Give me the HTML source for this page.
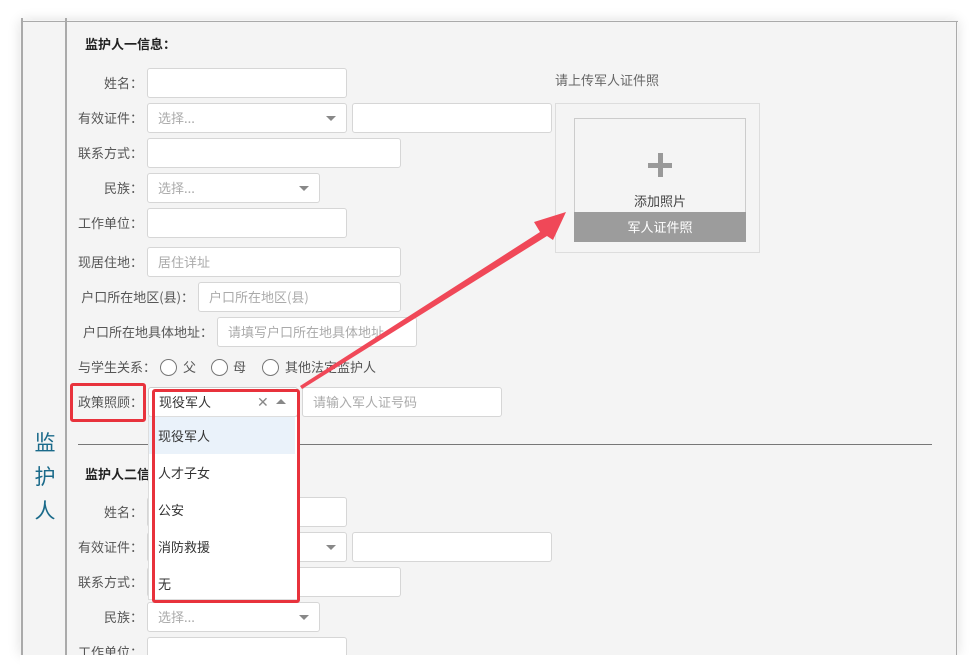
<!DOCTYPE html>
<html><head><meta charset="utf-8"><style>
*{box-sizing:border-box;margin:0;padding:0}
body{width:976px;height:671px;background:#fff;position:relative;overflow:hidden;font-family:"Noto Sans CJK SC","Liberation Sans",sans-serif;font-size:13px;color:#555}
.card{position:absolute;left:20px;top:20px;width:938px;height:635px;background:#f4f4f4;box-shadow:0 0 12px rgba(0,0,0,.12);overflow:hidden}
.a{position:absolute}
.lab{position:absolute;text-align:right;color:#555;font-size:13px;line-height:30px;white-space:nowrap}
.in{position:absolute;height:30px;background:#fff;border:1px solid #d6d6d6;border-radius:3px;color:#aaa;line-height:28px;padding-left:10px;font-size:13px;white-space:nowrap}
.tri{position:absolute;width:0;height:0;border-left:5px solid transparent;border-right:5px solid transparent;border-top:5px solid #888;top:12px}
.rad{position:absolute;width:17px;height:17px;border:1px solid #777;border-radius:50%;background:#fff;top:359px}
.opt{position:absolute;left:0;width:146px;height:37px;line-height:37px;padding-left:9px;color:#333;font-size:13px}
</style></head><body>
<div class="card"></div>
<div class="a" style="left:21px;top:18px;width:2px;height:637px;background:#aaa"></div>
<div class="a" style="left:65px;top:18px;width:2px;height:637px;background:#aaa"></div>
<div class="a" style="left:21px;top:21px;width:937px;height:1px;background:#aaa"></div>
<div class="a" style="left:956px;top:21px;width:1px;height:634px;background:#aaa"></div>
<div class="a" style="left:30px;top:425px;width:30px;font-size:21px;line-height:34px;color:#1a6a8a;text-align:center">监<br>护<br>人</div>

<div class="a" style="left:85px;top:34px;font-weight:bold;color:#222;font-size:13px">监护人一信息：</div>
<div class="lab" style="left:40px;width:103px;top:68px">姓名：</div><div class="in" style="left:147px;top:68px;width:200px"></div>
<div class="lab" style="left:40px;width:103px;top:103px">有效证件：</div><div class="in" style="left:147px;top:103px;width:200px">选择...<span class="tri" style="left:178px"></span></div><div class="in" style="left:352px;top:103px;width:200px"></div>
<div class="lab" style="left:40px;width:103px;top:138px">联系方式：</div><div class="in" style="left:147px;top:138px;width:254px"></div>
<div class="lab" style="left:40px;width:103px;top:173px">民族：</div><div class="in" style="left:147px;top:173px;width:173px">选择...<span class="tri" style="left:151px"></span></div>
<div class="lab" style="left:40px;width:103px;top:208px">工作单位：</div><div class="in" style="left:147px;top:208px;width:200px"></div>
<div class="lab" style="left:40px;width:103px;top:247px">现居住地：</div><div class="in" style="left:147px;top:247px;width:254px">居住详址</div>
<div class="lab" style="left:40px;width:154px;top:282px">户口所在地区(县)：</div><div class="in" style="left:198px;top:282px;width:203px">户口所在地区(县)</div>
<div class="lab" style="left:40px;width:173px;top:317px">户口所在地具体地址：</div><div class="in" style="left:217px;top:317px;width:200px">请填写户口所在地具体地址</div>
<div class="a" style="left:78px;top:357px;line-height:20px">与学生关系：</div>
<div class="rad" style="left:160px"></div><div class="a" style="left:183px;top:357px;line-height:20px">父</div>
<div class="rad" style="left:211px"></div><div class="a" style="left:233px;top:357px;line-height:20px">母</div>
<div class="rad" style="left:262px"></div><div class="a" style="left:285px;top:357px;line-height:20px">其他法定监护人</div>
<div class="lab" style="left:40px;width:103px;top:387px">政策照顾：</div>
<div class="a" style="left:70px;top:383px;width:76px;height:39px;border:3px solid #e8323c;border-radius:3px"></div>
<div class="in" style="left:148px;top:387px;width:150px;color:#333;border-color:#ccc">现役军人<span class="a" style="left:108px;top:0;color:#888;font-size:14px">✕</span><span class="a" style="left:127px;top:11px;border-left:5px solid transparent;border-right:5px solid transparent;border-bottom:5px solid #888"></span></div>
<div class="in" style="left:302px;top:387px;width:200px">请输入军人证号码</div>

<div class="a" style="left:78px;top:444px;width:854px;height:1px;background:#777"></div>
<div class="a" style="left:85px;top:464px;font-weight:bold;color:#222">监护人二信息：</div>
<div class="lab" style="left:40px;width:103px;top:497px">姓名：</div><div class="in" style="left:147px;top:497px;width:200px"></div>
<div class="lab" style="left:40px;width:103px;top:532px">有效证件：</div><div class="in" style="left:147px;top:532px;width:200px">选择...<span class="tri" style="left:178px"></span></div><div class="in" style="left:352px;top:532px;width:200px"></div>
<div class="lab" style="left:40px;width:103px;top:567px">联系方式：</div><div class="in" style="left:147px;top:567px;width:254px"></div>
<div class="lab" style="left:40px;width:103px;top:602px">民族：</div><div class="in" style="left:147px;top:602px;width:173px">选择...<span class="tri" style="left:151px"></span></div>
<div class="lab" style="left:40px;width:103px;top:637px">工作单位：</div><div class="in" style="left:147px;top:637px;width:200px"></div>

<!-- dropdown -->
<div class="a" style="left:148px;top:416px;width:150px;height:184px;background:#fff;border:1px solid #ddd">
<div class="opt" style="top:0;background:#eaf2fa">现役军人</div>
<div class="opt" style="top:37px">人才子女</div>
<div class="opt" style="top:74px">公安</div>
<div class="opt" style="top:111px">消防救援</div>
<div class="opt" style="top:148px">无</div>
</div>
<div class="a" style="left:152px;top:389px;width:148px;height:214px;border:3px solid #e8323c;border-radius:3px"></div>
<div class="a" style="left:20px;top:655px;width:956px;height:16px;background:#fff"></div>

<!-- upload -->
<div class="a" style="left:555px;top:70px;color:#666;font-size:13px">请上传军人证件照</div>
<div class="a" style="left:555px;top:103px;width:205px;height:150px;border:1px solid #ddd;background:#f4f4f4"></div>
<div class="a" style="left:574px;top:118px;width:172px;height:124px;border:1px solid #ccc;background:#f4f4f4">
<div class="a" style="left:73px;top:44px;width:24px;height:5px;background:#999"></div>
<div class="a" style="left:83px;top:34px;width:5px;height:24px;background:#999"></div>
<div class="a" style="left:0;width:170px;top:72px;text-align:center;color:#444;font-size:13px">添加照片</div>
<div class="a" style="left:-1px;top:93px;width:172px;height:30px;background:#9c9c9c;color:#fff;text-align:center;line-height:30px;font-size:13px">军人证件照</div>
</div>

<svg class="a" style="left:0;top:0" width="976" height="671"><polygon points="300,386 540,232 534,222 566,212 553,240 547,236 302,389" fill="#f04858"/></svg>
</body></html>
